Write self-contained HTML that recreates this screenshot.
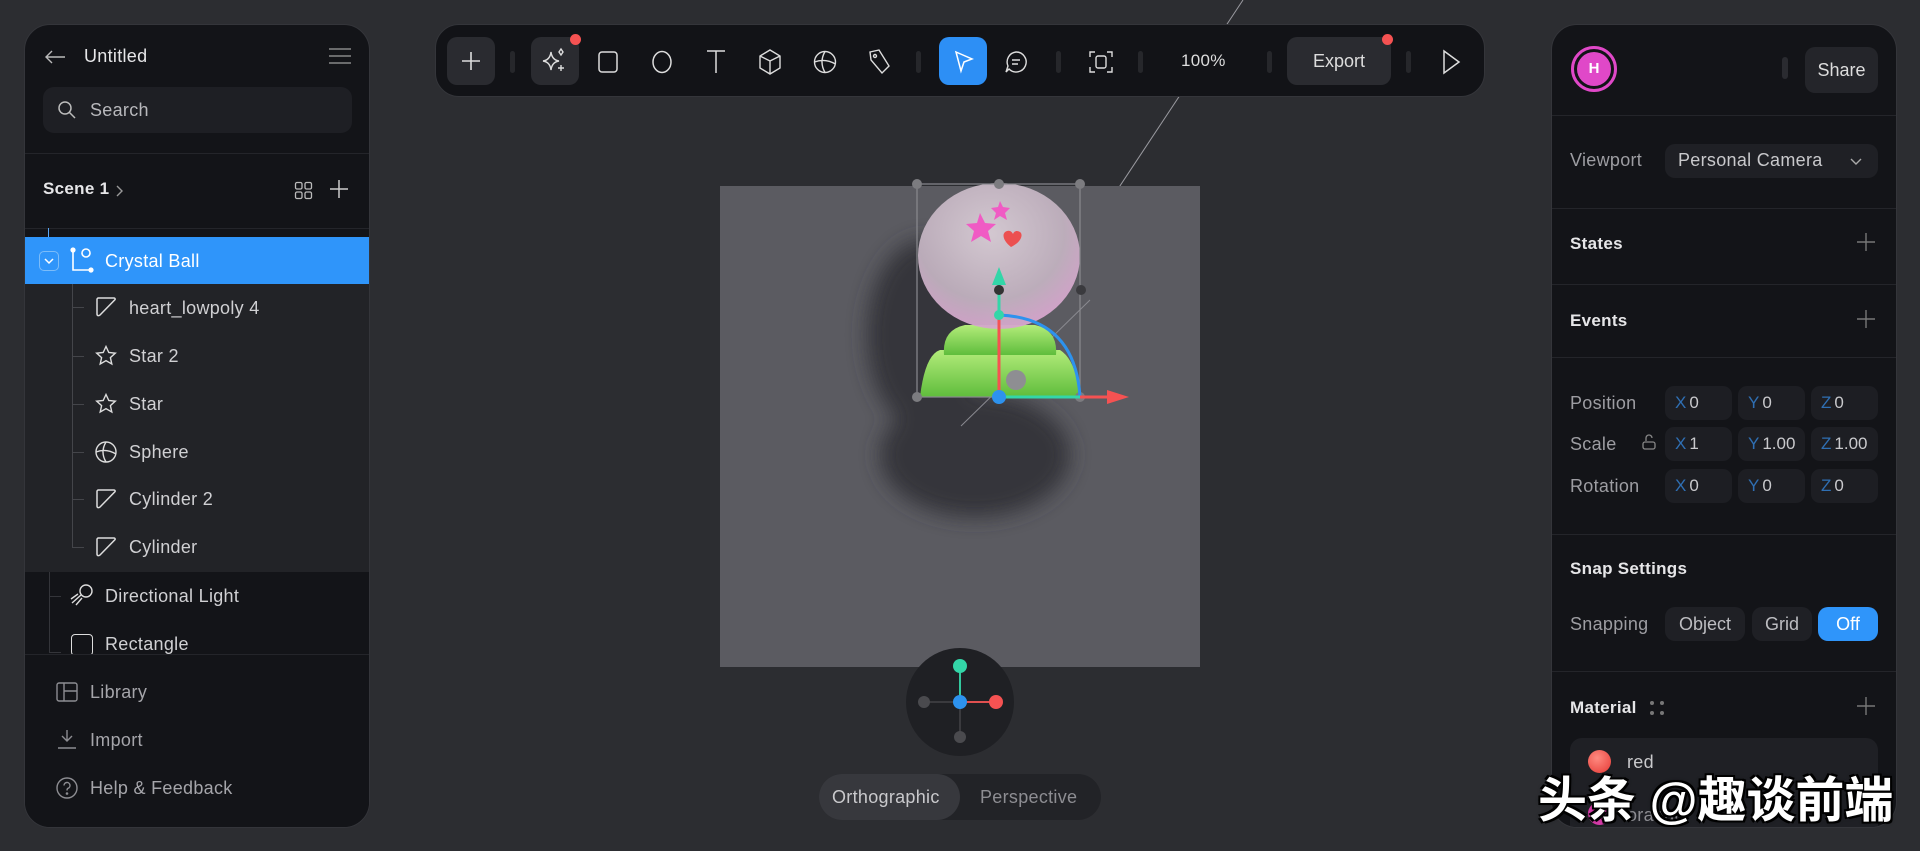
<!DOCTYPE html>
<html><head><meta charset="utf-8"><style>
*{box-sizing:border-box;margin:0;padding:0}
body{width:1920px;height:851px;background:#2c2d31;font-family:"Liberation Sans",sans-serif;color:#e6e6e8;position:relative;overflow:hidden}
.abs{position:absolute}
.panel{position:absolute;background:#131418;border:1px solid #34353a;border-radius:26px;overflow:hidden}
.t{position:absolute;font-size:18px;letter-spacing:0.3px;white-space:nowrap;line-height:20px}
.div{position:absolute;left:0;right:0;height:1px;background:#24252a}
.sep{position:absolute;width:5px;height:22px;background:#26272b;border-radius:3px;top:26px}
.inp{position:absolute;width:67px;height:34px;background:#1d1e23;border-radius:9px;font-size:17px;line-height:34px;padding-left:10px;color:#c9c9cc}
.inp b{font-weight:normal;color:#2f6fb3;margin-right:3px}
.btn{position:absolute;height:34px;border-radius:10px;background:#1f2025;color:#bdbdc1;font-size:18px;line-height:34px;text-align:center}
svg.ic{position:absolute;overflow:visible}
</style></head><body>

<svg class="abs" style="left:0;top:0" width="1920" height="851">
<defs>
<radialGradient id="sph" cx="45%" cy="35%" r="65%"><stop offset="0" stop-color="#d9cdd6"/><stop offset="0.7" stop-color="#c1b1bf"/><stop offset="1" stop-color="#d6a6cd"/></radialGradient>
<linearGradient id="grn" x1="0" y1="0" x2="0" y2="1"><stop offset="0" stop-color="#b3ec7a"/><stop offset="1" stop-color="#5fbd3c"/></linearGradient>
<filter id="bl" x="-50%" y="-50%" width="200%" height="200%"><feGaussianBlur stdDeviation="10"/></filter>
</defs>
<line x1="1243" y1="0" x2="961" y2="426" stroke="#9a9aa0" stroke-width="1"/>
<rect x="720" y="186" width="480" height="481" fill="#5b5b61"/>
<g filter="url(#bl)" fill="#36363b"><ellipse cx="925" cy="335" rx="58" ry="95"/><ellipse cx="975" cy="455" rx="95" ry="62"/></g>
<line x1="1090" y1="300" x2="961" y2="426" stroke="#8a8a90" stroke-width="1"/>
<path d="M920 397 Q925 355 940 350 L1060 350 Q1076 360 1080 397 Z" fill="url(#grn)"/>
<path d="M944 355 Q942 330 965 325 L1035 325 Q1058 330 1056 355 Z" fill="url(#grn)"/>
<ellipse cx="999" cy="256" rx="81" ry="73" fill="url(#sph)" opacity="0.95"/>
<path d="M980 213 l5 10 11 1 -8 7 3 11 -10-6 -10 6 3-11 -8-7 11-1z" fill="#f05bc4"/>
<path d="M1000 201 l3 6 7 1 -5 5 2 7 -7-4 -6 4 2-7 -5-5 7-1z" fill="#f05bc4"/>
<path d="M1011 247 c-8-6-10-14-4-16 3-1 5 1 6 3 1-3 4-4 7-2 4 3 0 11-9 15z" fill="#ec5050"/>
<rect x="917" y="184" width="163" height="213" fill="none" stroke="#8a8a8f" stroke-width="1.2"/>
<g fill="#7c7c80"><circle cx="917" cy="184" r="5"/><circle cx="1080" cy="184" r="5"/><circle cx="917" cy="397" r="5"/><circle cx="1080" cy="397" r="5"/><circle cx="999" cy="184" r="5"/></g>
<circle cx="1081" cy="290" r="5" fill="#3a3a3e"/>
<circle cx="1016" cy="380" r="10" fill="#8e8e92"/>
<path d="M999 315 Q1075 318 1080 397" fill="none" stroke="#2d92ee" stroke-width="3"/>
<line x1="999" y1="397" x2="999" y2="290" stroke="#f55252" stroke-width="3"/>
<line x1="999" y1="315" x2="999" y2="285" stroke="#33d6a8" stroke-width="3"/>
<path d="M999 267 l-7 18 h14z" fill="#33d6a8"/>
<circle cx="999" cy="290" r="5" fill="#333"/>
<circle cx="999" cy="315" r="5" fill="#33d6a8"/>
<line x1="999" y1="397" x2="1080" y2="397" stroke="#33d6a8" stroke-width="3"/>
<line x1="1080" y1="397" x2="1110" y2="397" stroke="#f55252" stroke-width="3"/>
<path d="M1129 397 l-22 -7 v14z" fill="#f55252"/>
<circle cx="999" cy="397" r="7" fill="#2d92ee"/>
<circle cx="960" cy="702" r="54" fill="#1f2024"/>
<line x1="924" y1="702" x2="996" y2="702" stroke="#3a3a3e" stroke-width="2"/>
<line x1="960" y1="666" x2="960" y2="737" stroke="#3a3a3e" stroke-width="2"/>
<line x1="960" y1="702" x2="996" y2="702" stroke="#e05050" stroke-width="2"/>
<line x1="960" y1="666" x2="960" y2="702" stroke="#33c89e" stroke-width="2"/>
<circle cx="924" cy="702" r="6" fill="#4a4a4e"/><circle cx="960" cy="737" r="6" fill="#4a4a4e"/>
<circle cx="996" cy="702" r="7" fill="#f55252"/><circle cx="960" cy="666" r="7" fill="#33d6a8"/><circle cx="960" cy="702" r="7" fill="#2d92ee"/>
</svg>
<div class="abs" style="left:819px;top:774px;width:282px;height:46px;border-radius:23px;background:#222327"></div>
<div class="abs" style="left:819px;top:774px;width:141px;height:46px;border-radius:23px;background:#37383d"></div>
<div class="t" style="left:832px;top:787px;color:#c9c9cc">Orthographic</div>
<div class="t" style="left:980px;top:787px;color:#8d8d92">Perspective</div>

<div class="panel" style="left:435px;top:24px;width:1050px;height:73px;border-radius:24px;background:#121317">
 <div class="abs" style="left:11px;top:12px;width:48px;height:48px;border-radius:10px;background:#2a2b30"></div>
 <svg class="ic" style="left:25px;top:26px" width="20" height="20"><path d="M10 1v18M1 10h18" stroke="#ddd" stroke-width="1.6"/></svg>
 <div class="sep" style="left:74px"></div>
 <div class="abs" style="left:95px;top:12px;width:48px;height:48px;border-radius:10px;background:#2a2b30"></div>
 <svg class="ic" style="left:106px;top:23px" width="26" height="26" fill="none" stroke="#ddd" stroke-width="1.4"><path d="M9 4 q1 8 8 9 q-7 1 -8 9 q-1 -8 -8 -9 q7 -1 8 -9z"/><path d="M19 1 l2 3 -2 3 -2 -3z"/><path d="M19 17v6M16 20h6"/></svg>
 <div class="abs" style="left:134px;top:9px;width:11px;height:11px;border-radius:50%;background:#f55252"></div>
 <svg class="ic" style="left:162px;top:26px" width="20" height="22" fill="none" stroke="#ddd" stroke-width="1.5"><rect x="1" y="1" width="18" height="20" rx="3"/></svg>
 <svg class="ic" style="left:215px;top:25px" width="22" height="24" fill="none" stroke="#ddd" stroke-width="1.5"><ellipse cx="11" cy="12" rx="9" ry="10.5"/></svg>
 <svg class="ic" style="left:270px;top:25px" width="20" height="24" fill="none" stroke="#ddd" stroke-width="1.5"><path d="M1 1h18M10 1v22"/></svg>
 <svg class="ic" style="left:323px;top:24px" width="22" height="26" fill="none" stroke="#ddd" stroke-width="1.4"><path d="M11 1 L21 7 V19 L11 25 L1 19 V7Z M1 7 L11 12 L21 7 M11 12 V25"/></svg>
 <svg class="ic" style="left:377px;top:25px" width="24" height="24" fill="none" stroke="#ddd" stroke-width="1.4"><circle cx="12" cy="12" r="10.5"/><path d="M12 1.5 Q6 12 12 22.5 M1.5 12 Q12 8 22.5 14"/></svg>
 <svg class="ic" style="left:431px;top:24px" width="24" height="26" fill="none" stroke="#ddd" stroke-width="1.4"><path d="M3 3 L12 1 L22 17 L15 24 L4 11 Z"/><circle cx="8" cy="7" r="1.5"/></svg>
 <div class="sep" style="left:480px"></div>
 <div class="abs" style="left:503px;top:12px;width:48px;height:48px;border-radius:10px;background:#2d8ff5"></div>
 <svg class="ic" style="left:518px;top:26px" width="20" height="22" fill="none" stroke="#fff" stroke-width="1.5"><path d="M2 1 L18 8 L10 11 L7 20 Z"/></svg>
 <svg class="ic" style="left:568px;top:25px" width="24" height="24" fill="none" stroke="#ddd" stroke-width="1.4"><path d="M12 2a10 10 0 1 1 -7 17 L2 22 L4 16 A10 10 0 0 1 12 2z M8 10h8M8 14h6"/></svg>
 <div class="sep" style="left:620px"></div>
 <svg class="ic" style="left:653px;top:25px" width="24" height="24" fill="none" stroke="#ddd" stroke-width="1.4"><path d="M1 7V2h5M18 2h5v5M23 17v5h-5M6 22H1v-5"/><rect x="7" y="6" width="10" height="12" rx="2"/></svg>
 <div class="sep" style="left:702px"></div>
 <div class="t" style="left:745px;top:26px;font-size:17px;color:#ddd">100%</div>
 <div class="sep" style="left:831px"></div>
 <div class="abs" style="left:851px;top:12px;width:104px;height:48px;border-radius:10px;background:#2a2b30;color:#ddd;font-size:18px;line-height:48px;text-align:center">Export</div>
 <div class="abs" style="left:946px;top:9px;width:11px;height:11px;border-radius:50%;background:#f55252"></div>
 <div class="sep" style="left:970px"></div>
 <svg class="ic" style="left:1006px;top:25px" width="18" height="24" fill="none" stroke="#ddd" stroke-width="1.5"><path d="M2 1 L17 12 L2 23Z"/></svg>
</div>

<div class="panel" style="left:24px;top:24px;width:346px;height:804px">
 <svg class="ic" style="left:20px;top:25px" width="20" height="14" fill="none" stroke="#bbb" stroke-width="1.4"><path d="M20 7H1M7 1L1 7l6 6"/></svg>
 <div class="t" style="left:59px;top:21px">Untitled</div>
 <svg class="ic" style="left:304px;top:22px" width="22" height="18" stroke="#888" stroke-width="1.4"><path d="M0 2h22M0 9h22M0 16h22"/></svg>
 <div class="abs" style="left:18px;top:62px;width:309px;height:46px;background:#1e1f24;border-radius:11px"></div>
 <svg class="ic" style="left:33px;top:76px" width="18" height="18" fill="none" stroke="#bbb" stroke-width="1.5"><circle cx="7" cy="7" r="6"/><path d="M11.5 11.5L17 17"/></svg>
 <div class="t" style="left:65px;top:75px;color:#b8b8bc">Search</div>
 <div class="div" style="top:128px"></div>
 <div class="t" style="left:18px;top:154px;font-weight:bold;font-size:17px">Scene 1</div>
 <svg class="ic" style="left:91px;top:160px" width="8" height="12" fill="none" stroke="#999" stroke-width="1.4"><path d="M1 1l5 5-5 5"/></svg>
 <svg class="ic" style="left:270px;top:157px" width="17" height="17" fill="none" stroke="#bbb" stroke-width="1.3"><rect x="0.5" y="0.5" width="6.5" height="6.5" rx="1.5"/><rect x="10" y="0.5" width="6.5" height="6.5" rx="1.5"/><rect x="0.5" y="10" width="6.5" height="6.5" rx="1.5"/><rect x="10" y="10" width="6.5" height="6.5" rx="1.5"/></svg>
 <svg class="ic" style="left:305px;top:155px" width="18" height="18" stroke="#ccc" stroke-width="1.5"><path d="M9 0v18M0 9h18"/></svg>
 <div class="div" style="top:203px"></div>
 <div class="abs" style="left:23px;top:203px;width:1px;height:9px;background:#5aa7f5"></div>
 <div class="abs" style="left:0;top:212px;width:346px;height:47px;background:#2f95fa"></div>
 <div class="abs" style="left:14px;top:226px;width:20px;height:20px;border:1px solid #7bbcf9;border-radius:5px"></div>
 <svg class="ic" style="left:19px;top:233px" width="10" height="6" fill="none" stroke="#fff" stroke-width="1.5"><path d="M1 1l4 4 4-4"/></svg>
 <svg class="ic" style="left:45px;top:222px" width="24" height="26" fill="none" stroke="#fff" stroke-width="1.6"><path d="M3 3v20h18"/><circle cx="3" cy="3" r="1.8" fill="#fff"/><circle cx="21" cy="23" r="1.8" fill="#fff"/><circle cx="16" cy="6" r="4"/></svg>
 <div class="t" style="left:80px;top:226px;color:#fff">Crystal Ball</div>
 <div class="abs" style="left:0;top:259px;width:346px;height:288px;background:#222327"></div>
 <div class="abs" style="left:47px;top:259px;width:1px;height:264px;background:#44454a"></div>
 <div class="abs" style="left:24px;top:547px;width:1px;height:80px;background:#34353a"></div>
 <div class="abs" style="left:47px;top:282px;width:12px;height:1px;background:#44454a"></div>
 <svg class="ic" style="left:70px;top:272px" width="22" height="20" fill="none" stroke="#ddd" stroke-width="1.5"><path d="M3 1h16c1 0 1.5 1 1 1.7L5 18c-1 1-3 1-3-1V2z"/></svg>
 <div class="t" style="left:104px;top:273px;color:#d0d0d3">heart_lowpoly 4</div>
 <div class="abs" style="left:47px;top:331px;width:12px;height:1px;background:#44454a"></div>
 <svg class="ic" style="left:70px;top:320px" width="22" height="22" fill="none" stroke="#ddd" stroke-width="1.4"><path d="M11 1.5l2.8 6 6.5.7-4.9 4.4 1.4 6.4L11 15.7 5.2 19l1.4-6.4L1.7 8.2l6.5-.7z"/></svg>
 <div class="t" style="left:104px;top:321px;color:#d0d0d3">Star 2</div>
 <div class="abs" style="left:47px;top:379px;width:12px;height:1px;background:#44454a"></div>
 <svg class="ic" style="left:70px;top:368px" width="22" height="22" fill="none" stroke="#ddd" stroke-width="1.4"><path d="M11 1.5l2.8 6 6.5.7-4.9 4.4 1.4 6.4L11 15.7 5.2 19l1.4-6.4L1.7 8.2l6.5-.7z"/></svg>
 <div class="t" style="left:104px;top:369px;color:#d0d0d3">Star</div>
 <div class="abs" style="left:47px;top:427px;width:12px;height:1px;background:#44454a"></div>
 <svg class="ic" style="left:70px;top:416px" width="22" height="22" fill="none" stroke="#ddd" stroke-width="1.4"><circle cx="11" cy="11" r="10"/><path d="M11 1Q5 11 11 21M1 11Q11 7 21 13"/></svg>
 <div class="t" style="left:104px;top:417px;color:#d0d0d3">Sphere</div>
 <div class="abs" style="left:47px;top:474px;width:12px;height:1px;background:#44454a"></div>
 <svg class="ic" style="left:70px;top:464px" width="22" height="20" fill="none" stroke="#ddd" stroke-width="1.5"><path d="M3 1h16c1 0 1.5 1 1 1.7L5 18c-1 1-3 1-3-1V2z"/></svg>
 <div class="t" style="left:104px;top:464px;color:#d0d0d3">Cylinder 2</div>
 <div class="abs" style="left:47px;top:522px;width:12px;height:1px;background:#44454a"></div>
 <svg class="ic" style="left:70px;top:512px" width="22" height="20" fill="none" stroke="#ddd" stroke-width="1.5"><path d="M3 1h16c1 0 1.5 1 1 1.7L5 18c-1 1-3 1-3-1V2z"/></svg>
 <div class="t" style="left:104px;top:512px;color:#d0d0d3">Cylinder</div>
 <div class="abs" style="left:24px;top:571px;width:12px;height:1px;background:#34353a"></div>
 <svg class="ic" style="left:45px;top:559px" width="24" height="22" fill="none" stroke="#ddd" stroke-width="1.4"><circle cx="16" cy="7" r="6"/><path d="M11 11L2 19M8 10L1 15M12 14L6 21"/></svg>
 <div class="t" style="left:80px;top:561px;color:#d0d0d3">Directional Light</div>
 <div class="abs" style="left:24px;top:627px;width:12px;height:1px;background:#34353a"></div>
 <div class="abs" style="left:46px;top:609px;width:22px;height:22px;border:1.5px solid #ddd;border-radius:4px"></div>
 <div class="t" style="left:80px;top:609px;color:#d0d0d3">Rectangle</div>
 <div class="abs" style="left:0;top:629px;width:346px;height:175px;background:#131418"></div>
 <div class="div" style="top:629px"></div>
 <svg class="ic" style="left:31px;top:657px" width="22" height="20" fill="none" stroke="#8d8d92" stroke-width="1.4"><rect x="1" y="1" width="20" height="18" rx="2"/><path d="M8 1v18M8 9h13"/></svg>
 <div class="t" style="left:65px;top:657px;color:#a5a5aa">Library</div>
 <svg class="ic" style="left:32px;top:704px" width="20" height="20" fill="none" stroke="#8d8d92" stroke-width="1.4"><path d="M10 1v11M5 7l5 5 5-5M1 19h18"/></svg>
 <div class="t" style="left:65px;top:705px;color:#a5a5aa">Import</div>
 <svg class="ic" style="left:31px;top:752px" width="22" height="22" fill="none" stroke="#8d8d92" stroke-width="1.4"><circle cx="11" cy="11" r="10"/><path d="M8 8.5a3 3 0 1 1 4 2.8c-1 .4-1 1-1 2.2"/><circle cx="11" cy="16.5" r=".6" fill="#8d8d92"/></svg>
 <div class="t" style="left:65px;top:753px;color:#a5a5aa">Help &amp; Feedback</div>
</div>

<div class="panel" style="left:1551px;top:24px;width:346px;height:804px">
 <div class="abs" style="left:19px;top:21px;width:46px;height:46px;border-radius:50%;border:3px solid #e048c8"></div>
 <div class="abs" style="left:25px;top:27px;width:34px;height:34px;border-radius:50%;background:#e048c8;color:#fff;font-weight:bold;font-size:15px;line-height:34px;text-align:center">H</div>
 <div class="abs" style="left:230px;top:32px;width:6px;height:22px;border-radius:3px;background:#2a2b30"></div>
 <div class="abs" style="left:253px;top:22px;width:73px;height:46px;border-radius:10px;background:#24252a;color:#ddd;font-size:18px;line-height:46px;text-align:center">Share</div>
 <div class="div" style="top:90px"></div>
 <div class="t" style="left:18px;top:125px;color:#9d9da2">Viewport</div>
 <div class="abs" style="left:113px;top:119px;width:213px;height:34px;border-radius:10px;background:#1f2025"></div>
 <div class="t" style="left:126px;top:125px;color:#c9c9cc">Personal Camera</div>
 <svg class="ic" style="left:298px;top:133px" width="12" height="7" fill="none" stroke="#aaa" stroke-width="1.4"><path d="M1 1l5 5 5-5"/></svg>
 <div class="div" style="top:183px"></div>
 <div class="t" style="left:18px;top:209px;font-weight:bold;font-size:17px">States</div>
 <svg class="ic" style="left:305px;top:208px" width="18" height="18" stroke="#777" stroke-width="1.4"><path d="M9 0v18M0 9h18"/></svg>
 <div class="div" style="top:259px"></div>
 <div class="t" style="left:18px;top:286px;font-weight:bold;font-size:17px">Events</div>
 <svg class="ic" style="left:305px;top:285px" width="18" height="18" stroke="#777" stroke-width="1.4"><path d="M9 0v18M0 9h18"/></svg>
 <div class="div" style="top:332px"></div>
 <div class="t" style="left:18px;top:368px;color:#9d9da2">Position</div>
 <div class="inp" style="left:113px;top:361px"><b>X</b>0</div><div class="inp" style="left:186px;top:361px"><b>Y</b>0</div><div class="inp" style="left:259px;top:361px"><b>Z</b>0</div>
 <div class="t" style="left:18px;top:409px;color:#9d9da2">Scale</div>
 <svg class="ic" style="left:90px;top:409px" width="14" height="16" fill="none" stroke="#888" stroke-width="1.3"><path d="M4 7V4a3 3 0 0 1 6 0"/><rect x="1" y="8" width="12" height="7" rx="2"/></svg>
 <div class="inp" style="left:113px;top:402px"><b>X</b>1</div><div class="inp" style="left:186px;top:402px"><b>Y</b>1.00</div><div class="inp" style="left:259px;top:402px"><b>Z</b>1.00</div>
 <div class="t" style="left:18px;top:451px;color:#9d9da2">Rotation</div>
 <div class="inp" style="left:113px;top:444px"><b>X</b>0</div><div class="inp" style="left:186px;top:444px"><b>Y</b>0</div><div class="inp" style="left:259px;top:444px"><b>Z</b>0</div>
 <div class="div" style="top:509px"></div>
 <div class="t" style="left:18px;top:534px;font-weight:bold;font-size:17px">Snap Settings</div>
 <div class="t" style="left:18px;top:589px;color:#9d9da2">Snapping</div>
 <div class="btn" style="left:113px;top:582px;width:80px">Object</div>
 <div class="btn" style="left:200px;top:582px;width:60px">Grid</div>
 <div class="btn" style="left:266px;top:582px;width:60px;background:#2f95fa;color:#fff">Off</div>
 <div class="div" style="top:646px"></div>
 <div class="t" style="left:18px;top:673px;font-weight:bold;font-size:17px">Material</div>
 <svg class="ic" style="left:98px;top:676px" width="14" height="14" fill="#777"><circle cx="2" cy="2" r="2"/><circle cx="12" cy="2" r="2"/><circle cx="2" cy="12" r="2"/><circle cx="12" cy="12" r="2"/></svg>
 <svg class="ic" style="left:305px;top:672px" width="18" height="18" stroke="#777" stroke-width="1.4"><path d="M9 0v18M0 9h18"/></svg>
 <div class="abs" style="left:18px;top:713px;width:308px;height:100px;border-radius:12px;background:#1f2025"></div>
 <div class="abs" style="left:36px;top:725px;width:23px;height:23px;border-radius:50%;background:radial-gradient(circle at 40% 35%,#ff8a80,#e53935)"></div>
 <div class="t" style="left:75px;top:727px;color:#c9c9cc">red</div>
 <div class="abs" style="left:36px;top:777px;width:23px;height:23px;border-radius:50%;background:#d63aa8"></div>
 <div class="t" style="left:75px;top:780px;color:#8d8d92">orange</div>
</div>

<div class="abs" style="left:1538px;top:772px;font-family:'Liberation Sans','Noto Sans CJK SC',sans-serif;font-size:49px;font-weight:bold;color:#fff;white-space:nowrap;text-shadow:-2px -2px 0 #000,2px -2px 0 #000,-2px 2px 0 #000,2px 2px 0 #000,0 0 4px #000;line-height:58px">头条 @趣谈前端</div>
</body></html>
